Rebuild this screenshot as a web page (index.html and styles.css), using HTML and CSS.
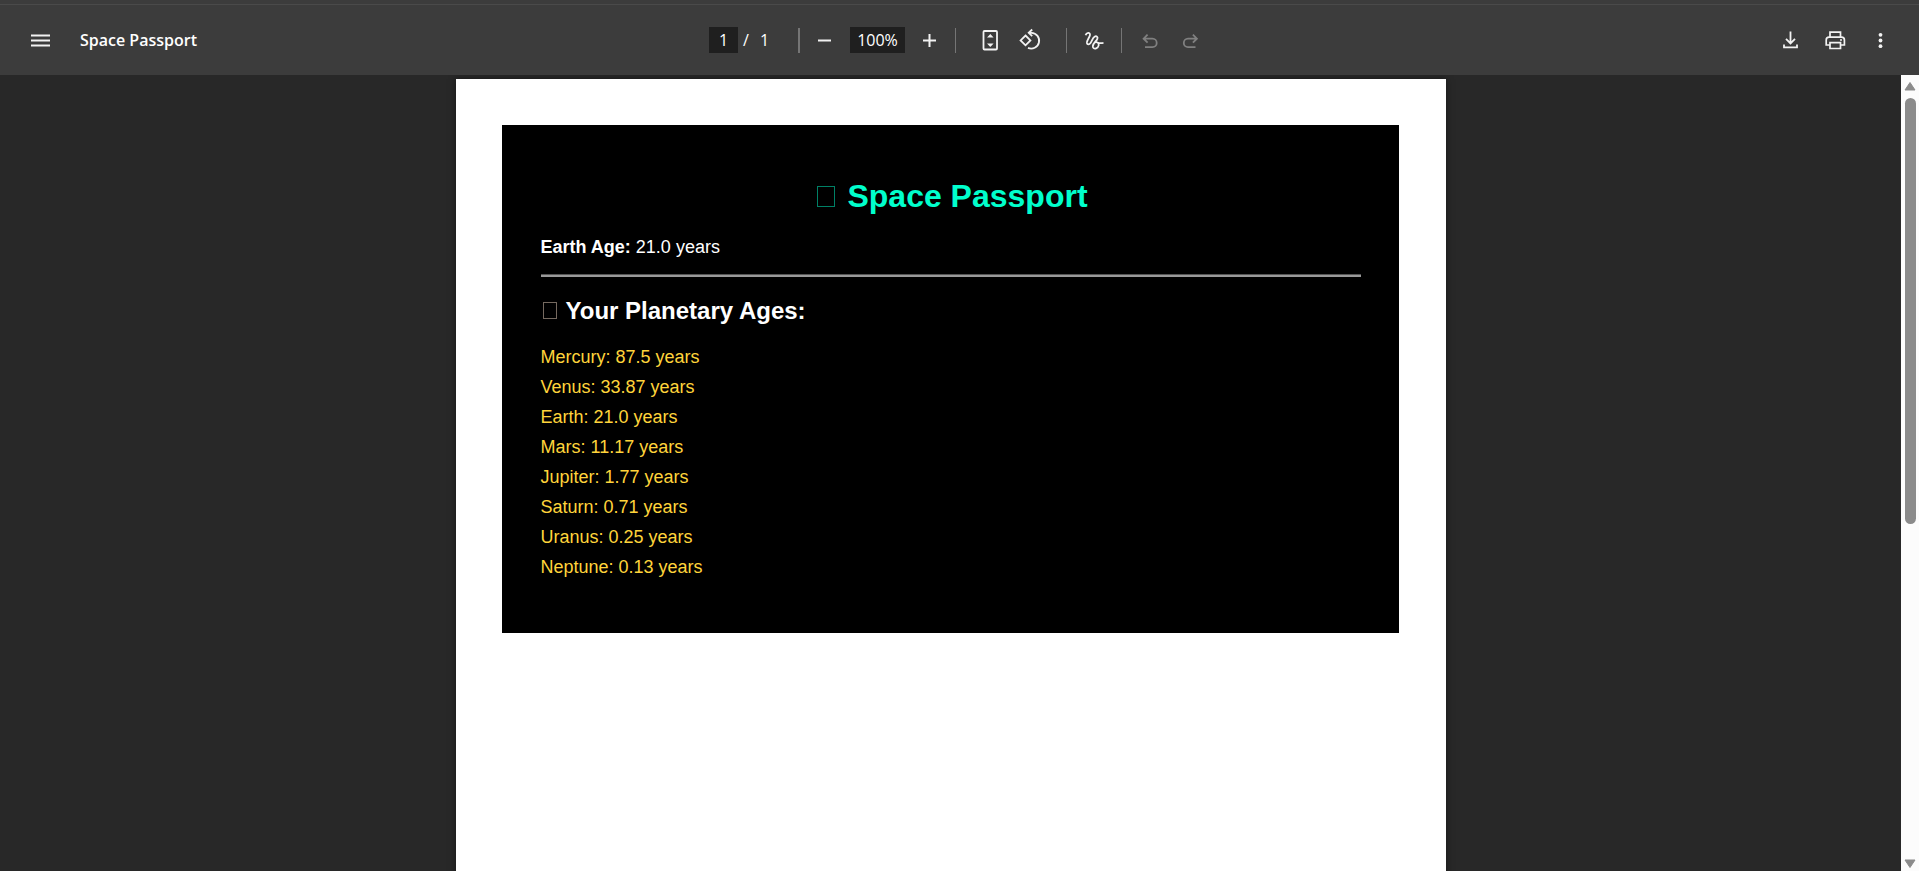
FILE: index.html
```html
<!DOCTYPE html>
<html lang="en">
<head>
<meta charset="utf-8">
<title>Space Passport</title>
<link rel="stylesheet" href="styles.css">
</head>
<body>
<header class="toolbar">
  <div class="toolbar-start">
    <button class="tool" type="button" aria-label="Menu">
      <svg width="20" height="20" viewBox="0 0 20 20"><path d="M1 5.500h19M1 10.500h19M1 15.500h19" stroke-width="2"/></svg>
    </button>
    <span class="doc-title">Space Passport</span>
  </div>
  <div class="toolbar-center">
    <input class="field page-field" type="text" value="1" aria-label="Page number">
    <span class="page-slash">/</span><span class="page-total">1</span>
    <span class="divider divider-wide"></span>
    <button class="tool" type="button" aria-label="Zoom out">
      <svg width="20" height="20" viewBox="0 0 20 20"><path d="M3 10.500h13" stroke-width="2"/></svg>
    </button>
    <input class="field zoom-field" type="text" value="100%" aria-label="Zoom level">
    <button class="tool" type="button" aria-label="Zoom in">
      <svg width="20" height="20" viewBox="0 0 20 20"><path d="M4 10.500h13M10.500 4v13" stroke-width="2"/></svg>
    </button>
    <span class="divider divider-zoom"></span>
    <button class="tool" type="button" aria-label="Fit to page">
      <svg width="24" height="24" viewBox="0 0 24 24"><rect x="5.500" y="3" width="13.500" height="18.500" rx="1" stroke-width="1.800"/><path class="solid" d="M9 9.500 12.300 6l3.300 3.500zM9 15.500 12.300 19l3.300-3.500z"/></svg>
    </button>
    <button class="tool" type="button" aria-label="Rotate">
      <svg width="24" height="24" viewBox="0 0 24 24"><path d="M7.500 7.500 12.400 12.400 7.500 17.300 2.600 12.400z"/><path d="M10.600 4.800h2.900a7.900 7.900 0 1 1-3.500 15.100M14.200 1.500l-3.500 3.300L14.200 8.200"/></svg>
    </button>
    <span class="divider divider-draw"></span>
    <button class="tool" type="button" aria-label="Draw">
      <svg width="24" height="24" viewBox="0 0 24 24"><path d="M3.600 7.300C4.300 4.400 8.300 4 8 6.900 7.700 9.500 4.500 12.500 4.900 15c.4 2 2.500 1.600 3.600 0 1.500-2.300 2.200-5.400 4.300-6.500 1.700-.8 3.200.5 2.600 2.200-.8 2.400-4.500 4.500-4.600 7.400-.1 2.200 1.600 3 3.300 2.300 2.900-1.200 3.500-4.800 1.400-5.900-1-.5-2-.4-2.600 0M15.500 14.500c1.700.8 4 .7 6 .4" stroke-width="1.800"/></svg>
    </button>
    <span class="divider"></span>
    <button class="tool" type="button" aria-label="Undo" disabled>
      <svg width="24" height="24" viewBox="0 0 24 24"><path d="M10.600 6.700 6.600 10.700l4 4M6.800 10.700h8.700a4.200 4.200 0 0 1 0 8.400H8"/></svg>
    </button>
    <button class="tool" type="button" aria-label="Redo" disabled>
      <svg width="24" height="24" viewBox="0 0 24 24"><path d="M15.900 6.700l4 4-4 4M19.700 10.700h-8.700a4.200 4.200 0 0 0 0 8.400h7.500"/></svg>
    </button>
  </div>
  <div class="toolbar-end">
    <button class="tool" type="button" aria-label="Download">
      <svg width="24" height="24" viewBox="0 0 24 24"><path d="M12.500 3.500v11.700M8 10.900l4.500 4.500 4.500-4.500M6 16.500v2.800h13v-2.800"/></svg>
    </button>
    <button class="tool" type="button" aria-label="Print">
      <svg width="24" height="24" viewBox="0 0 24 24"><path d="M7 8.500V4.200h10.500v4.300M6.500 17H3.200v-4.900c0-1.900 1-2.900 2.900-2.900h12.400c1.900 0 2.900 1 2.900 2.900V17H18M7 14.700h10.500v5.800H7z" stroke-width="1.700"/><circle class="solid" cx="18" cy="12" r="1"/></svg>
    </button>
    <button class="tool" type="button" aria-label="More actions">
      <svg width="24" height="24" viewBox="0 0 24 24"><g class="solid"><circle cx="12.500" cy="6.800" r="1.900"/><circle cx="12.500" cy="12.500" r="1.900"/><circle cx="12.500" cy="18.200" r="1.900"/></g></svg>
    </button>
  </div>
</header>
<div class="viewer">
  <main class="canvas">
    <article class="sheet">
      <section class="passport">
        <h1><span class="tofu"></span>Space Passport</h1>
        <p class="earth-age"><strong>Earth Age:</strong> 21.0 years</p>
        <hr>
        <h2><span class="tofu"></span>Your Planetary Ages:</h2>
        <ul>
          <li>Mercury: 87.5 years</li>
          <li>Venus: 33.87 years</li>
          <li>Earth: 21.0 years</li>
          <li>Mars: 11.17 years</li>
          <li>Jupiter: 1.77 years</li>
          <li>Saturn: 0.71 years</li>
          <li>Uranus: 0.25 years</li>
          <li>Neptune: 0.13 years</li>
        </ul>
      </section>
    </article>
  </main>
  <div class="scrollbar" aria-hidden="true">
    <svg width="12" height="10" viewBox="0 0 12 10"><path d="M6 1.500 11 9H1z"/></svg>
    <div class="track"><div class="thumb"></div></div>
    <svg width="12" height="10" viewBox="0 0 12 10"><path d="M6 8.500 11 1H1z"/></svg>
  </div>
</div>
</body>
</html>
```
FILE: styles.css
```css
* { box-sizing: border-box; }

body {
  margin: 0;
  height: 100vh;
  display: flex;
  flex-direction: column;
  overflow: hidden;
  background: #282828;
  font-family: "Liberation Sans", Arial, sans-serif;
}

/* Toolbar */
.toolbar {
  flex: none;
  display: grid;
  grid-template-columns: 1fr auto 1fr;
  align-items: center;
  height: 75px;
  padding: 5px 19px 0 20px;
  background: linear-gradient(#3c3c3c 4px, #4a4a4a 4px, #4a4a4a 5px, #3c3c3c 5px);
  color: #fff;
  font-family: "Open Sans", "Noto Sans", sans-serif;
  font-size: 16px;
}

.toolbar-start,
.toolbar-center,
.toolbar-end {
  display: flex;
  align-items: center;
}

.toolbar-center { padding-right: 2px; }

.toolbar-end {
  justify-content: flex-end;
  gap: 5px;
}

.doc-title {
  margin-left: 20px;
  font-weight: 600;
}

.tool {
  display: flex;
  align-items: center;
  justify-content: center;
  width: 40px;
  height: 40px;
  padding: 0;
  border: 0;
  background: none;
  color: #f2f2f2;
}

.tool:disabled { color: #808080; }

.tool svg {
  fill: none;
  stroke: currentColor;
  stroke-width: 1.8;
}

.tool .solid {
  fill: currentColor;
  stroke: none;
}

.field {
  height: 26px;
  padding: 0;
  border: 0;
  background: #1f1f1f;
  color: #fff;
  font: inherit;
  text-align: center;
}

.page-field { width: 29px; }

.zoom-field {
  width: 55px;
  margin: 0 4px 0 5px;
}

.page-slash {
  width: 14px;
  margin-left: 5px;
}

.page-total {
  width: 15px;
  margin-right: 2px;
  text-align: center;
}

.divider {
  width: 1px;
  height: 25px;
  margin: 0 7px;
  background: #757575;
}

.divider-wide {
  width: 2px;
  margin: 0 5px 0 24px;
}

.divider-zoom { margin: 0 14px 0 6px; }
.divider-draw { margin-left: 16px; }

/* Document area */
.viewer {
  flex: 1;
  display: flex;
  min-height: 0;
}

.canvas {
  flex: 1;
  padding-top: 4px;
  overflow: hidden;
}

.sheet {
  width: 100%;
  max-width: 990px;
  aspect-ratio: 210 / 297;
  margin: 0 auto;
  padding: 46px 47px 46px 46px;
  background: #fff;
  box-shadow: 0 0 7px rgba(0, 0, 0, 0.5);
}

.passport {
  padding: 52px 38px 51px 39px;
  background: #000;
  color: #fff;
  font-size: 18px;
  line-height: 30px;
}

.passport h1 {
  margin: 0 0 17px;
  color: #00ffcc;
  font-size: 32px;
  line-height: 38px;
  text-align: center;
}

.earth-age { margin: 0; }

.passport hr {
  height: 3px;
  margin: 12px 0 19px;
  border: 0;
  background: linear-gradient(#555 1px, #999 1px);
}

.passport h2 {
  margin: 0 0 16px;
  font-size: 24px;
  line-height: 30px;
}

.passport ul {
  margin: 0;
  padding: 0;
  list-style: none;
  color: #ffd43b;
}

/* Hollow box standing in for a glyph the font lacks */
.tofu {
  display: inline-block;
  width: 18px;
  height: 21px;
  margin: 0 12px 0 4px;
  border: 1px solid #008066;
}

h2 .tofu {
  width: 14px;
  height: 17px;
  margin: 0 9px 0 2px;
  border-color: #75695f;
}

/* Scrollbar */
.scrollbar {
  flex: none;
  display: flex;
  flex-direction: column;
  align-items: center;
  gap: 7px;
  width: 18px;
  padding: 6px 0 2px;
  background: #fcfcfc;
}

.scrollbar svg {
  fill: #8b8b8b;
  stroke: #8b8b8b;
  stroke-linejoin: round;
}

.track {
  flex: 1;
  width: 11px;
}

.thumb {
  height: 56.5%;
  border-radius: 6px;
  background: #8b8b8b;
}
```
